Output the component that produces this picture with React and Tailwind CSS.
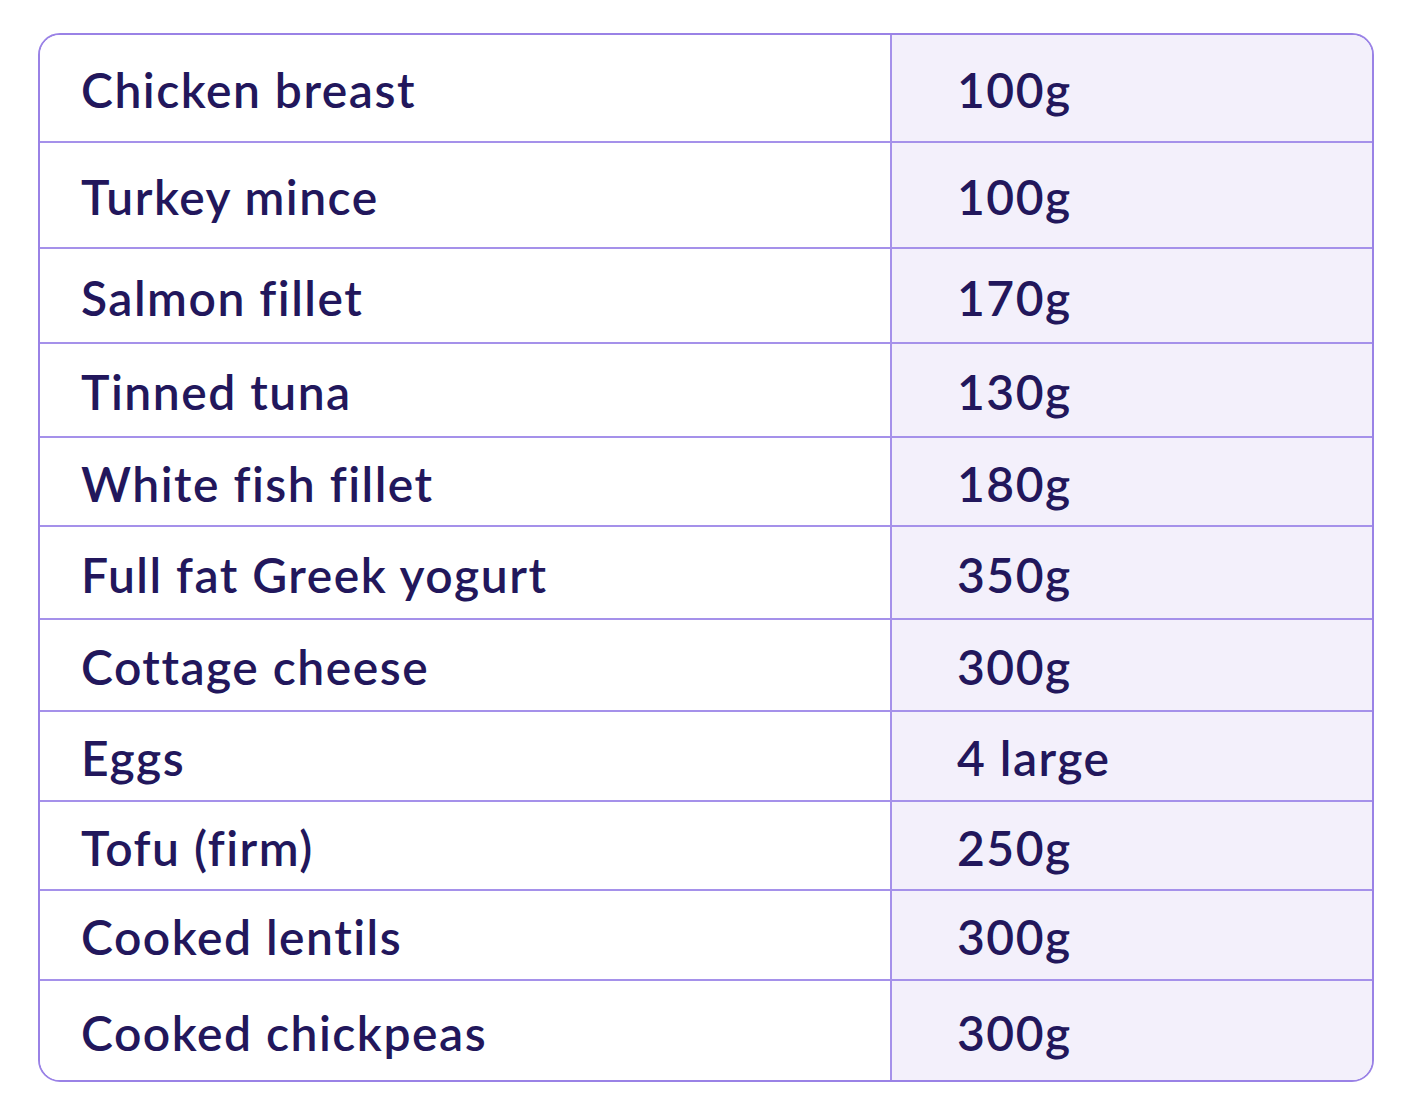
import React from "react";

const rows = [
  ["Chicken breast", "100g", "h-[108px]"],
  ["Turkey mince", "100g", "h-[106px]"],
  ["Salmon fillet", "170g", "h-[95px]"],
  ["Tinned tuna", "130g", "h-[94px]"],
  ["White fish fillet", "180g", "h-[89px]"],
  ["Full fat Greek yogurt", "350g", "h-[93px]"],
  ["Cottage cheese", "300g", "h-[92px]"],
  ["Eggs", "4 large", "h-[90px]"],
  ["Tofu (firm)", "250g", "h-[89px]"],
  ["Cooked lentils", "300g", "h-[90px]"],
  ["Cooked chickpeas", "300g", "h-[99px]"],
];

export default function App() {
  return (
    <div className="w-[1412px] h-[1114px] bg-white pt-[33px] pl-[38px]">
      <div
        className="w-[1336px] border-2 border-[#9a82e6] rounded-[22px] overflow-hidden text-[#22175c]"
        style={{ fontFamily: "Lato, 'Noto Sans', sans-serif" }}
      >
        {rows.map(([food, amount, h], i) => (
          <div
            key={food}
            className={`flex ${h} ${i < rows.length - 1 ? "border-b-2 border-[#a591ea]" : ""}`}
          >
            <div className="w-[850px] flex items-center pl-[41px] pt-[4px] bg-white text-[48px] font-semibold tracking-[1.5px]">
              {food}
            </div>
            <div className="flex-1 flex items-center pl-[65px] pt-[4px] bg-[#f3f0fb] border-l-2 border-[#a591ea] text-[48px] font-semibold tracking-[1.5px]">
              {amount}
            </div>
          </div>
        ))}
      </div>
    </div>
  );
}
